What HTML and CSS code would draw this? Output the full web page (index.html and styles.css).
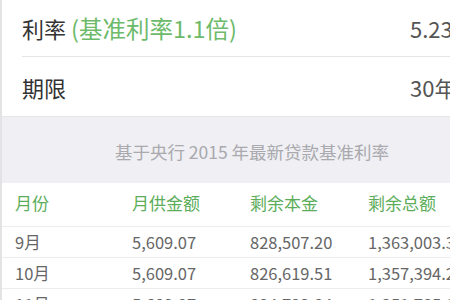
FILE: index.html
```html
<!DOCTYPE html>
<html lang="zh-CN">
<head>
<meta charset="utf-8">
<link rel="stylesheet" href="styles.css">
</head>
<body>
<div class="page">
  <section class="info">
    <div class="info-row first">
      <span class="label">利率 <span class="hint">(基准利率1.1倍)</span></span>
      <span class="value">5.23%</span>
    </div>
    <div class="info-row">
      <span class="label">期限</span>
      <span class="value">30年</span>
    </div>
  </section>
  <div class="note">基于央行 2015 年最新贷款基准利率</div>
  <section class="table">
    <div class="trow head">
      <span>月份</span><span>月供金额</span><span>剩余本金</span><span>剩余总额</span>
    </div>
    <div class="trow">
      <span>9月</span><span>5,609.07</span><span>828,507.20</span><span>1,363,003.33</span>
    </div>
    <div class="trow">
      <span>10月</span><span>5,609.07</span><span>826,619.51</span><span>1,357,394.26</span>
    </div>
    <div class="trow">
      <span>11月</span><span>5,609.07</span><span>824,723.84</span><span>1,351,785.19</span>
    </div>
  </section>
</div>
</body>
</html>
```
FILE: styles.css
```css
html, body {
  margin: 0;
  padding: 0;
  background: #ffffff;
  overflow: hidden;
}
body {
  width: 450px;
  height: 300px;
  font-family: "Noto Sans CJK SC", "Noto Sans", sans-serif;
}
.page {
  width: 520px;
  border-left: 2px solid #e3e3e6;
  height: 300px;
}
.info {
  background: #ffffff;
}
.info-row {
  display: grid;
  grid-template-columns: 388px 1fr;
  align-items: center;
  margin-left: 20px;
  height: 59px;
  font-size: 22px;
  color: #333333;
}
.info-row.first {
  height: 56px;
  border-bottom: 1px solid #e6e6e6;
}
.hint {
  color: #6dba6a;
  font-size: 23.5px;
}
.value {
  color: #555555;
}
.note {
  background: #efeff4;
  height: 67px;
  border-top: 1px solid #e6e6ea;
  display: flex;
  align-items: center;
  justify-content: center;
  width: 500px;
  font-size: 17.5px;
  color: #a9a9ae;
  padding-top: 3px;
  box-sizing: border-box;
}
.table {
  padding-left: 13px;
}
.trow {
  display: grid;
  grid-template-columns: 117px 118px 118px 1fr;
  align-items: center;
  height: 30px;
  border-bottom: 1px solid #ececec;
  font-size: 16.5px;
  color: #666666;
  margin-left: -13px;
  padding-left: 13px;
}
.trow.head {
  height: 44px;
  align-items: start;
  padding-top: 7px;
  box-sizing: border-box;
  color: #5cad5a;
  font-size: 17px;
}
```
